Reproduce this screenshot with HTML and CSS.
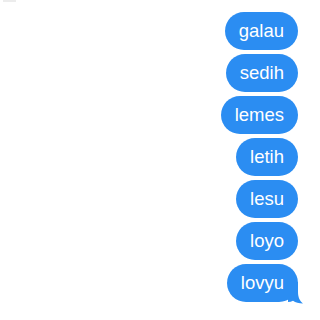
FILE: index.html
```html
<!DOCTYPE html>
<html>
<head>
<meta charset="utf-8">
<link rel="stylesheet" href="styles.css">
</head>
<body>
<div class="mark"></div>
<div class="thread">
  <div class="bubble">galau</div>
  <div class="bubble">sedih</div>
  <div class="bubble">lemes</div>
  <div class="bubble">letih</div>
  <div class="bubble">lesu</div>
  <div class="bubble">loyo</div>
  <div class="bubble last">lovyu<svg class="tail" width="16" height="22" viewBox="0 0 16 22"><path d="M0,0 L10,0 L10,10 C10,15.5 12,19 15,21.5 C11,21.5 7.5,20.5 5,18.8 C3.5,19.6 1.8,20 0,20 Z" fill="#2b8df2"/></svg></div>
</div>
</body>
</html>
```
FILE: styles.css
```css
html, body {
  margin: 0;
  padding: 0;
  background: #ffffff;
}
body {
  width: 320px;
  height: 320px;
  overflow: hidden;
  font-family: "Liberation Sans", Arial, sans-serif;
}
.mark {
  width: 13px;
  height: 2px;
  margin-left: 3px;
  background: #ececec;
}
.thread {
  display: flex;
  flex-direction: column;
  align-items: flex-end;
  gap: 4px;
  padding-top: 10px;
  padding-right: 22px;
}
.bubble {
  position: relative;
  background: #2b8df2;
  color: #ffffff;
  font-size: 18.5px;
  line-height: 38px;
  height: 38px;
  padding: 0 14px;
  border-radius: 19px;
}
.tail {
  position: absolute;
  right: -6px;
  bottom: -2px;
}
```
